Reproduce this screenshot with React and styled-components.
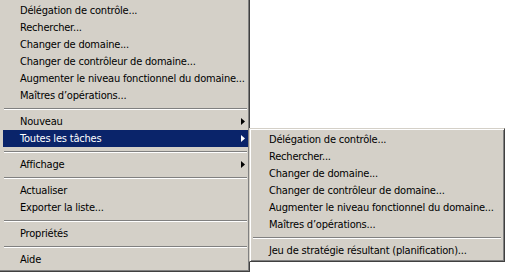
import styled, { createGlobalStyle } from 'styled-components';

const GlobalStyle = createGlobalStyle`
	html, body {
		margin: 0;
		padding: 0;
		background: #ffffff;
	}
	body {
		font-family: "DejaVu Sans Condensed", "DejaVu Sans", sans-serif;
		font-size: 11px;
		letter-spacing: -0.2px;
	}
`;

const mainItems = [
	{ label: 'Délégation de contrôle...' },
	{ label: 'Rechercher...' },
	{ label: 'Changer de domaine...' },
	{ label: 'Changer de contrôleur de domaine...' },
	{ label: 'Augmenter le niveau fonctionnel du domaine...' },
	{ label: 'Maîtres d’opérations...' },
	{ separator: true },
	{ label: 'Nouveau', sub: true },
	{ label: 'Toutes les tâches', sub: true, active: true, open: true },
	{ separator: true },
	{ label: 'Affichage', sub: true },
	{ separator: true },
	{ label: 'Actualiser' },
	{ label: 'Exporter la liste...' },
	{ separator: true },
	{ label: 'Propriétés' },
	{ separator: true },
	{ label: 'Aide' },
];

const subItems = [
	{ label: 'Délégation de contrôle...' },
	{ label: 'Rechercher...' },
	{ label: 'Changer de domaine...' },
	{ label: 'Changer de contrôleur de domaine...' },
	{ label: 'Augmenter le niveau fonctionnel du domaine...' },
	{ label: 'Maîtres d’opérations...' },
	{ separator: true },
	{ label: 'Jeu de stratégie résultant (planification)...' },
];

const MainMenu = styled.ul`
	list-style: none;
	margin: 0;
	width: 250px;
	box-sizing: border-box;
	padding: 2px 1px 3px 3px;
	background: #d4d0c8;
	border-right: 1px solid #404040;
	border-bottom: 1px solid #404040;
	box-shadow: inset -1px -1px 0 #808080;
`;

const SubMenu = styled.ul`
	position: absolute;
	left: 246px;
	top: -2px;
	z-index: 2;
	list-style: none;
	margin: 0;
	width: 256px;
	box-sizing: border-box;
	padding: 2px;
	background: #d4d0c8;
	color: #000000;
	border: 1px solid;
	border-color: #d4d0c8 #404040 #404040 #d4d0c8;
	box-shadow: inset 1px 1px 0 #ffffff, inset -1px -1px 0 #808080;
`;

const Item = styled.li`
	position: relative;
	display: flex;
	align-items: center;
	height: 17px;
	padding: 0 3px 0 17px;
	white-space: nowrap;
	color: ${({ $active }) => ($active ? '#ffffff' : '#000000')};
	background: ${({ $active }) => ($active ? '#0a246a' : 'transparent')};
`;

const Label = styled.span`
	flex: 1;
`;

const Arrow = styled.svg`
	display: block;
	width: 4px;
	height: 7px;
	fill: currentColor;
`;

const Separator = styled.li`
	display: flex;
	align-items: center;
	height: 9px;
	padding: 0 1px;

	&::before {
		content: '';
		flex: 1;
		border-top: 1px solid #808080;
		border-bottom: 1px solid #ffffff;
	}
`;

const renderItems = (items, sub) =>
	items.map((item, i) =>
		item.separator ? (
			<Separator key={i} />
		) : (
			<Item key={i} $active={item.active}>
				<Label>{item.label}</Label>
				{item.sub && (
					<Arrow viewBox="0 0 4 7">
						<polygon points="0,0 4,3.5 0,7" />
					</Arrow>
				)}
				{item.open && sub && <SubMenu>{renderItems(sub)}</SubMenu>}
			</Item>
		),
	);

export default function App() {
	return (
		<>
			<GlobalStyle />
			<MainMenu>{renderItems(mainItems, subItems)}</MainMenu>
		</>
	);
}
